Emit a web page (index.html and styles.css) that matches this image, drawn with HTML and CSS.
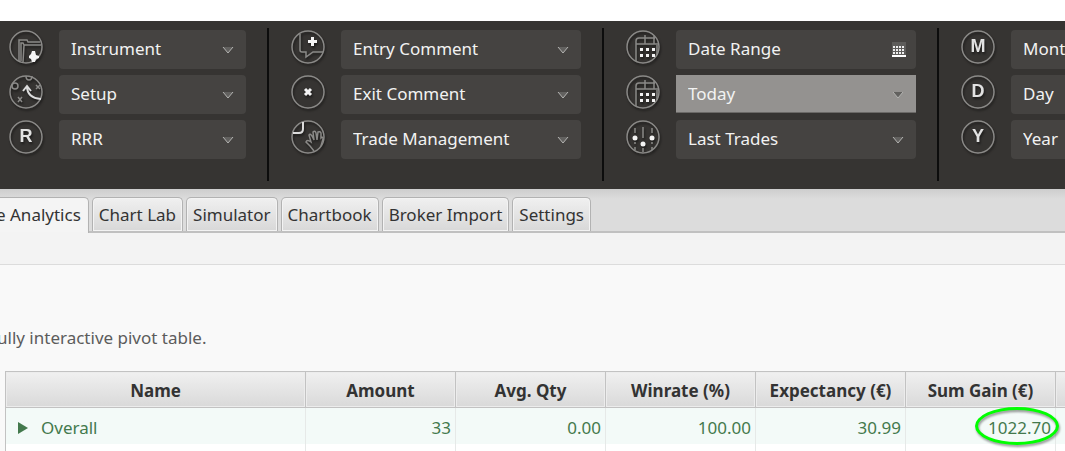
FILE: index.html
```html
<!DOCTYPE html>
<html lang="en">

<head>
  <meta charset="UTF-8">
  <meta name="viewport" content="width=device-width, initial-scale=1.0">
  <title>Trade Analytics</title>
  <link rel="stylesheet" href="styles.css">
</head>

<body>
  <!-- shared icon shapes -->
  <svg class="defs" width="0" height="0" aria-hidden="true">
    <symbol id="arrow" viewBox="0 0 12 8">
      <path d="M1 1h10L6 7z" fill="#62615f" />
      <path d="M1 1l5 6 5-6" fill="none" stroke="#b4b4b2" stroke-width="1" />
    </symbol>
    <symbol id="calendar" viewBox="0 0 34 34">
      <circle cx="17" cy="17" r="16" />
      <path d="M10 31V11q0-3 3-3h16M10 14h22M19 5v9M28 6v8M31 15v10" />
      <path class="solid" d="M14 18h3v3h-3zM20 18h3v3h-3zM26 18h3v3h-3zM14 24h3v3h-3zM20 24h3v3h-3zM26 24h3v3h-3z" />
    </symbol>
  </svg>

  <form class="filters">
    <div class="filter-group narrow">
      <svg class="icon" viewBox="0 0 34 34">
        <circle cx="17" cy="17" r="16" />
        <path d="M10 31V10h8l1 2h12M14 32l1-17h17M15 15l-1-2h-2v18" />
        <path class="solid" d="M23 21h3l1 4 3 1v2l-3 1-1 3h-3l-1-3-2-1v-2l2-2z" />
      </svg>
      <div class="field">
        <select aria-label="Instrument"><option>Instrument</option></select>
        <svg class="arrow"><use href="#arrow" /></svg>
      </div>
      <svg class="icon" viewBox="0 0 34 34">
        <circle cx="17" cy="17" r="16" />
        <circle cx="6" cy="11" r="3" />
        <path d="M17 1q0 4 3 4t3-4M27 10l4 4M31 10l-4 4M9 22l4 5M13 22l-4 5" />
        <path class="bright" d="M14 16l4-5 4 5M18 11q0 12 14 13" />
      </svg>
      <div class="field">
        <select aria-label="Setup"><option>Setup</option></select>
        <svg class="arrow"><use href="#arrow" /></svg>
      </div>
      <svg class="icon" viewBox="0 0 34 34">
        <circle cx="17" cy="17" r="16" />
        <text x="17" y="22">R</text>
      </svg>
      <div class="field">
        <select aria-label="RRR"><option>RRR</option></select>
        <svg class="arrow"><use href="#arrow" /></svg>
      </div>
    </div>

    <div class="filter-group">
      <svg class="icon" viewBox="0 0 34 34">
        <circle cx="17" cy="17" r="16" />
        <path d="M9 4v16q0 2 2 2h4v5l7-5h10" />
        <path class="solid" d="M20 7h3v3h3v3h-3v3h-3v-3h-3v-3h3z" />
      </svg>
      <div class="field">
        <select aria-label="Entry Comment"><option>Entry Comment</option></select>
        <svg class="arrow"><use href="#arrow" /></svg>
      </div>
      <svg class="icon" viewBox="0 0 34 34">
        <circle cx="17" cy="17" r="16" />
        <path class="cross" d="M14 14l6 6M20 14l-6 6" />
      </svg>
      <div class="field">
        <select aria-label="Exit Comment"><option>Exit Comment</option></select>
        <svg class="arrow"><use href="#arrow" /></svg>
      </div>
      <svg class="icon" viewBox="0 0 34 34">
        <circle cx="17" cy="17" r="16" />
        <path class="bright" d="M2 13h6q4 0 4-4V2" />
        <path d="M23 31l-4-5-4-4q1-3 5 0l-2-7q1-2 3 1l2 4-1-8q2-2 3 1l1 7 1-8q2-1 3 1v5q2-2 2 1l-2 7" />
      </svg>
      <div class="field">
        <select aria-label="Trade Management"><option>Trade Management</option></select>
        <svg class="arrow"><use href="#arrow" /></svg>
      </div>
    </div>

    <div class="filter-group">
      <svg class="icon"><use href="#calendar" /></svg>
      <div class="field">
        <input type="text" value="Date Range" aria-label="Date Range">
        <svg class="picker" viewBox="0 0 14 15">
          <path d="M0 0h14v15H0z" fill="#5d5c5a" />
          <path d="M1 5h12M1 8h12M1 11h12" stroke="#eee" stroke-width="2" stroke-dasharray="2 1" />
          <path d="M0 14h14" stroke="#fff" stroke-width="2" />
        </svg>
      </div>
      <svg class="icon"><use href="#calendar" /></svg>
      <div class="field active">
        <select aria-label="Period"><option>Today</option></select>
        <svg class="arrow"><use href="#arrow" /></svg>
      </div>
      <svg class="icon" viewBox="0 0 34 34">
        <circle cx="17" cy="17" r="16" />
        <path d="M9 8v5M9 22v2M9 27v3M17 7v11M17 28v4M26 8v5M26 22v2M26 27v3" />
        <circle class="solid" cx="9" cy="18" r="2.500" />
        <circle class="solid" cx="17" cy="24" r="2.500" />
        <circle class="solid" cx="26" cy="18" r="2.500" />
      </svg>
      <div class="field">
        <select aria-label="Last Trades"><option>Last Trades</option></select>
        <svg class="arrow"><use href="#arrow" /></svg>
      </div>
    </div>

    <div class="filter-group">
      <svg class="icon" viewBox="0 0 34 34">
        <circle cx="17" cy="17" r="16" />
        <text x="17" y="22">M</text>
      </svg>
      <div class="field">
        <select aria-label="Month"><option>Month</option></select>
        <svg class="arrow"><use href="#arrow" /></svg>
      </div>
      <svg class="icon" viewBox="0 0 34 34">
        <circle cx="17" cy="17" r="16" />
        <text x="17" y="22">D</text>
      </svg>
      <div class="field">
        <select aria-label="Day"><option>Day</option></select>
        <svg class="arrow"><use href="#arrow" /></svg>
      </div>
      <svg class="icon" viewBox="0 0 34 34">
        <circle cx="17" cy="17" r="16" />
        <text x="17" y="22">Y</text>
      </svg>
      <div class="field">
        <select aria-label="Year"><option>Year</option></select>
        <svg class="arrow"><use href="#arrow" /></svg>
      </div>
    </div>
  </form>

  <nav class="tabs">
    <button type="button" class="tab selected">e Analytics</button>
    <button type="button" class="tab">Chart Lab</button>
    <button type="button" class="tab">Simulator</button>
    <button type="button" class="tab">Chartbook</button>
    <button type="button" class="tab">Broker Import</button>
    <button type="button" class="tab">Settings</button>
  </nav>
  <div class="subbar"></div>

  <main>
    <p class="intro">ully interactive pivot table.</p>
    <table class="pivot">
      <thead>
        <tr>
          <th class="name">Name</th>
          <th>Amount</th>
          <th>Avg. Qty</th>
          <th>Winrate (%)</th>
          <th>Expectancy (€)</th>
          <th>Sum Gain (€)</th>
          <th></th>
        </tr>
      </thead>
      <tbody>
        <tr class="overall">
          <td class="name">
            <div class="node">
              <svg class="expander" viewBox="0 0 10 12"><path d="M0 0l10 6-10 6z" fill="#43794d" /></svg>
              Overall
            </div>
          </td>
          <td>33</td>
          <td>0.00</td>
          <td>100.00</td>
          <td>30.99</td>
          <td class="marked">1022.70</td>
          <td></td>
        </tr>
        <tr>
          <td></td>
          <td></td>
          <td></td>
          <td></td>
          <td></td>
          <td></td>
          <td></td>
        </tr>
      </tbody>
    </table>
  </main>
</body>

</html>
```
FILE: styles.css
```css
*,
*::after {
  box-sizing: border-box;
}

html {
  height: 100%;
  overflow: hidden;
}

body {
  display: flex;
  flex-direction: column;
  height: 100%;
  margin: 0;
  padding-top: 21px;
  overflow: hidden;
  background-color: #fff;
  color: #333;
  font-family: "Noto Sans", "Open Sans", sans-serif;
  font-size: 17px;
  line-height: 24px;
}

.defs {
  position: absolute;
}

/* filters */
.filters {
  display: flex;
  flex-shrink: 0;
  padding: 7px 0 8px;
  overflow: hidden;
  background-color: #363432;
}

.filter-group {
  display: grid;
  flex-shrink: 0;
  grid-template-columns: 34px 240px;
  gap: 6px 16px;
  padding: 2px 21px 22px 22px;
  border-right: 2px solid #0c0c0c;
}

.filter-group.narrow {
  grid-template-columns: 34px 187px;
  padding-left: 9px;
}

.icon {
  width: 34px;
  height: 34px;
  fill: none;
  stroke: #8b8a88;
  stroke-width: 1.5;
  filter: drop-shadow(1px 2px 1px #1c1b1a);
}

.icon text {
  fill: #e2e2e2;
  stroke: none;
  font-family: "Liberation Sans", sans-serif;
  font-size: 18px;
  font-weight: 700;
  text-anchor: middle;
}

.solid {
  fill: #f4f4f4;
  stroke: none;
}

.bright {
  stroke: #dcdcdc;
  stroke-width: 2;
}

.cross {
  stroke: #f4f4f4;
  stroke-width: 3;
}

.field {
  display: grid;
  grid-template-columns: 1fr 12px 12px;
  align-items: center;
  height: 39px;
  border-radius: 4px;
  background-color: #454341;
}

.field select,
.field input {
  grid-area: 1 / 1 / 2 / 4;
  width: 100%;
  height: 39px;
  padding: 0 32px 2px 12px;
  border: 0;
  background: none;
  color: #f2f2f2;
  font: inherit;
  appearance: none;
}

.arrow {
  grid-area: 1 / 2;
  width: 12px;
  height: 8px;
  pointer-events: none;
}

.picker {
  grid-area: 1 / 2;
  width: 14px;
  height: 15px;
  pointer-events: none;
}

.field.active {
  height: 38px;
  margin-bottom: 1px;
  border-bottom: 1px solid #6b6967;
  border-radius: 0;
  background-color: #949290;
}

/* tabs */
.tabs {
  display: flex;
  flex-shrink: 0;
  gap: 3px;
  padding-top: 8px;
  border-bottom: 2px solid #c0c0c0;
  background: linear-gradient(#cdcdcd, #dcdcdc 10px);
}

.tab {
  flex-shrink: 0;
  height: 34px;
  padding: 1px 6px 0;
  border: 1px solid #b2b2b2;
  border-bottom: 0;
  border-radius: 5px 5px 0 0;
  background: linear-gradient(#f0f0f0, #d8d8d8);
  box-shadow: inset 0 0 0 1px #f3f3f3;
  color: #333;
  font: inherit;
}

.tab.selected {
  height: 36px;
  margin-bottom: -2px;
  margin-left: -12px;
  padding: 0 7px 1px;
  background: #f4f4f4;
}

.subbar {
  flex-shrink: 0;
  height: 32px;
  border-bottom: 1px solid #dcdcdc;
  background-color: #f3f3f3;
}

/* pivot table */
main {
  flex: 1;
  padding-left: 5px;
  background-color: #f9f9f9;
}

.intro {
  margin: 61px 0 21px -8px;
  color: #5c5c5c;
}

.pivot {
  width: 1200px;
  border-collapse: separate;
  border-spacing: 0;
  table-layout: fixed;
  border-top: 1px solid #c2c2c2;
  border-left: 1px solid #c2c2c2;
  background-color: #fff;
}

.pivot th,
.pivot td {
  width: 150px;
  height: 36px;
  padding: 3px 4px 0;
}

.pivot th.name {
  width: 300px;
}

.pivot th {
  border-right: 1px solid #c2c2c2;
  border-bottom: 1px solid #c2c2c2;
  background: linear-gradient(#f0f0f0, #d9d9d9);
  box-shadow: inset 0 0 0 1px #ececec;
  text-align: center;
  white-space: nowrap;
}

.pivot td {
  border-right: 1px solid #e6e9e8;
  text-align: right;
}

.overall td {
  background-color: #f3faf8;
  color: #43794d;
}

.node {
  display: flex;
  align-items: center;
  gap: 13px;
  padding-left: 8px;
}

.expander {
  width: 10px;
  height: 12px;
}

.marked {
  position: relative;
}

/* ring drawn over the value */
.marked::after {
  content: "";
  position: absolute;
  top: -1px;
  right: -4px;
  width: 84px;
  height: 38px;
  border: 3px solid #0f0;
  border-radius: 50%;
  filter: drop-shadow(1px 2px 1px rgba(0, 0, 0, 0.4));
}
```
